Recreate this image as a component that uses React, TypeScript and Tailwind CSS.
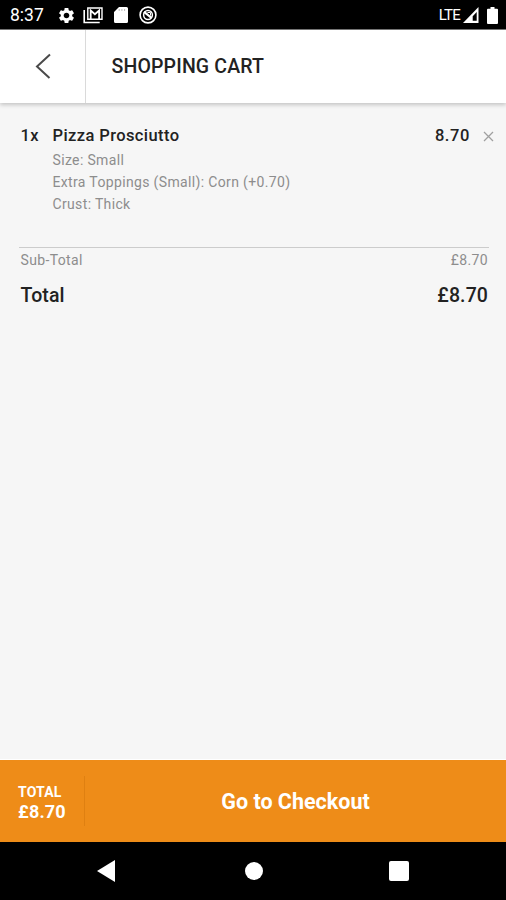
import { MdSettings } from 'react-icons/md';

const cartItem = {
  quantity: 1,
  name: 'Pizza Prosciutto',
  price: '8.70',
  options: ['Size: Small', 'Extra Toppings (Small): Corn (+0.70)', 'Crust: Thick'],
};

function StatusBar() {
  return (
    <div className="flex h-[30px] shrink-0 items-center border-b border-[#777] bg-black pt-px pr-2 pl-[10px] text-white">
      <span className="w-[47px] pt-[2px] text-[17.5px] leading-none">8:37</span>
      <MdSettings className="h-[19px] w-[19px]" />
      <svg className="ml-[7px] h-[18px] w-5" viewBox="0 0 20 18" fill="none" stroke="currentColor">
        <path d="M1.2 4v12.5h15.5" strokeWidth="1.6" />
        <path d="M4.8 13.2V2H19v11.2z" strokeWidth="1.4" />
        <path d="M7.7 13V4.6l4.2 3.7 4.200-3.700V13" strokeWidth="1.8" />
      </svg>
      <svg className="ml-[11px] h-4 w-[14px]" viewBox="0 0 14 16" fill="currentColor">
        <path d="M5 0h7.5A1.5 1.5 0 0 1 14 1.5v13a1.5 1.5 0 0 1-1.5 1.5h-11A1.5 1.5 0 0 1 0 14.5V5z" />
        <path d="M5.2 2v2M7.9 2v2M10.6 2v2" stroke="#bbb" strokeWidth="1" />
      </svg>
      <svg className="ml-[11px] h-[18px] w-[18px]" viewBox="0 0 18 18" fill="none" stroke="currentColor">
        <circle cx="9" cy="9" r="7.9" strokeWidth="1.6" />
        <circle cx="9" cy="9" r="4.4" strokeWidth="1.5" />
        <path d="M5 5.8l7.5 6" strokeWidth="2.2" />
        <path d="M8.500 6.500h3v3" strokeWidth="1" />
      </svg>
      <span className="ml-auto text-[15px] leading-none tracking-[-0.8px]">LTE</span>
      <svg className="ml-[3px] h-4 w-4" viewBox="0 0 16 16" fill="currentColor">
        <path fillRule="evenodd" d="M15.5 0v16H0zM13.7 5l-4 4.2v4.5h4z" />
      </svg>
      <svg className="ml-2 h-[17px] w-[11px]" viewBox="0 0 11 17" fill="currentColor">
        <path d="M3.5 0h4v1.8H10a1 1 0 0 1 1 1V16a1 1 0 0 1-1 1H1a1 1 0 0 1-1-1V2.8a1 1 0 0 1 1-1h2.5z" />
      </svg>
    </div>
  );
}

function Header() {
  return (
    <header className="z-10 flex h-[73px] shrink-0 items-stretch bg-white shadow-[0_2px_4px_rgba(0,0,0,0.2)]">
      <button aria-label="Back" className="flex w-[86px] items-center justify-center border-r border-[#dadada] pb-[2px]">
        <svg className="h-[26px] w-4" viewBox="0 0 16 26" fill="none" stroke="#4a4a4a" strokeWidth="2">
          <path d="M15 1.5l-13 12L14.5 25" />
        </svg>
      </button>
      <h1 className="flex items-center pt-px pl-[25.5px] text-[19.5px] font-medium tracking-[0.15px] text-[#222]">
        SHOPPING CART
      </h1>
    </header>
  );
}

export default function App() {
  return (
    <div className="flex h-[900px] w-[506px] flex-col overflow-hidden bg-[#f6f6f6] font-['Roboto','Liberation_Sans',sans-serif]">
      <StatusBar />
      <Header />

      <main className="flex-1 border-b border-white pt-[22px]">
        <section className="flex h-[122px] pr-3 pl-[20.5px]">
          <span className="w-8 text-[16.5px] leading-[22px] font-medium tracking-[0.3px] text-[#222]">
            {cartItem.quantity}x
          </span>
          <div className="flex-1">
            <h2 className="text-[16.5px] leading-[22px] font-medium tracking-[0.4px] text-[#222]">{cartItem.name}</h2>
            <ul className="pt-[2px]">
              {cartItem.options.map((option) => (
                <li key={option} className="text-[14px] leading-[22px] tracking-[0.35px] text-[#8d8d8d]">
                  {option}
                </li>
              ))}
            </ul>
          </div>
          <span className="text-[16.5px] leading-[22px] font-medium tracking-[0.6px] text-[#222]">{cartItem.price}</span>
          <button aria-label="Remove item" className="ml-[13px] flex h-[22px] items-center">
            <svg className="h-[11px] w-[11px]" viewBox="0 0 11 11" stroke="#a0a0a0" strokeWidth="1.3">
              <path d="M1 1l9 9M10 1l-9 9" />
            </svg>
          </button>
        </section>

        <section className="mr-[17px] ml-[19px] border-t border-[#ccc] pr-px pl-[1.5px]">
          <div className="flex justify-between pt-px text-[14px] leading-[22px] tracking-[0.35px] text-[#8d8d8d]">
            <span>Sub-Total</span>
            <span>£8.70</span>
          </div>
          <div className="flex justify-between pt-[13px] text-[19.5px] leading-6 font-medium tracking-[0.1px] text-[#222]">
            <span>Total</span>
            <span>£8.70</span>
          </div>
        </section>
      </main>

      <footer className="flex h-[82px] shrink-0 items-center bg-[#ee8c18] text-white">
        <div className="flex h-[50px] w-[85px] flex-col justify-center border-r border-[#df8011] pt-1 pl-[18px]">
          <span className="text-[14px] leading-[17px] font-bold tracking-[0.2px]">TOTAL</span>
          <span className="text-[18px] leading-[21px] font-bold tracking-[0.2px]">£8.70</span>
        </div>
        <button className="flex-1 pt-px text-center text-[21.5px] leading-6 font-bold">Go to Checkout</button>
      </footer>

      <nav className="flex h-[58px] shrink-0 items-center bg-black pl-[97px] text-white">
        <svg className="h-[22px] w-[18px]" viewBox="0 0 18 22" fill="currentColor">
          <path d="M18 0v22L0 11z" />
        </svg>
        <div className="ml-[130px] h-[18px] w-[18px] rounded-full bg-white" />
        <div className="ml-[126px] h-5 w-5 rounded-[2px] bg-white" />
      </nav>
    </div>
  );
}
